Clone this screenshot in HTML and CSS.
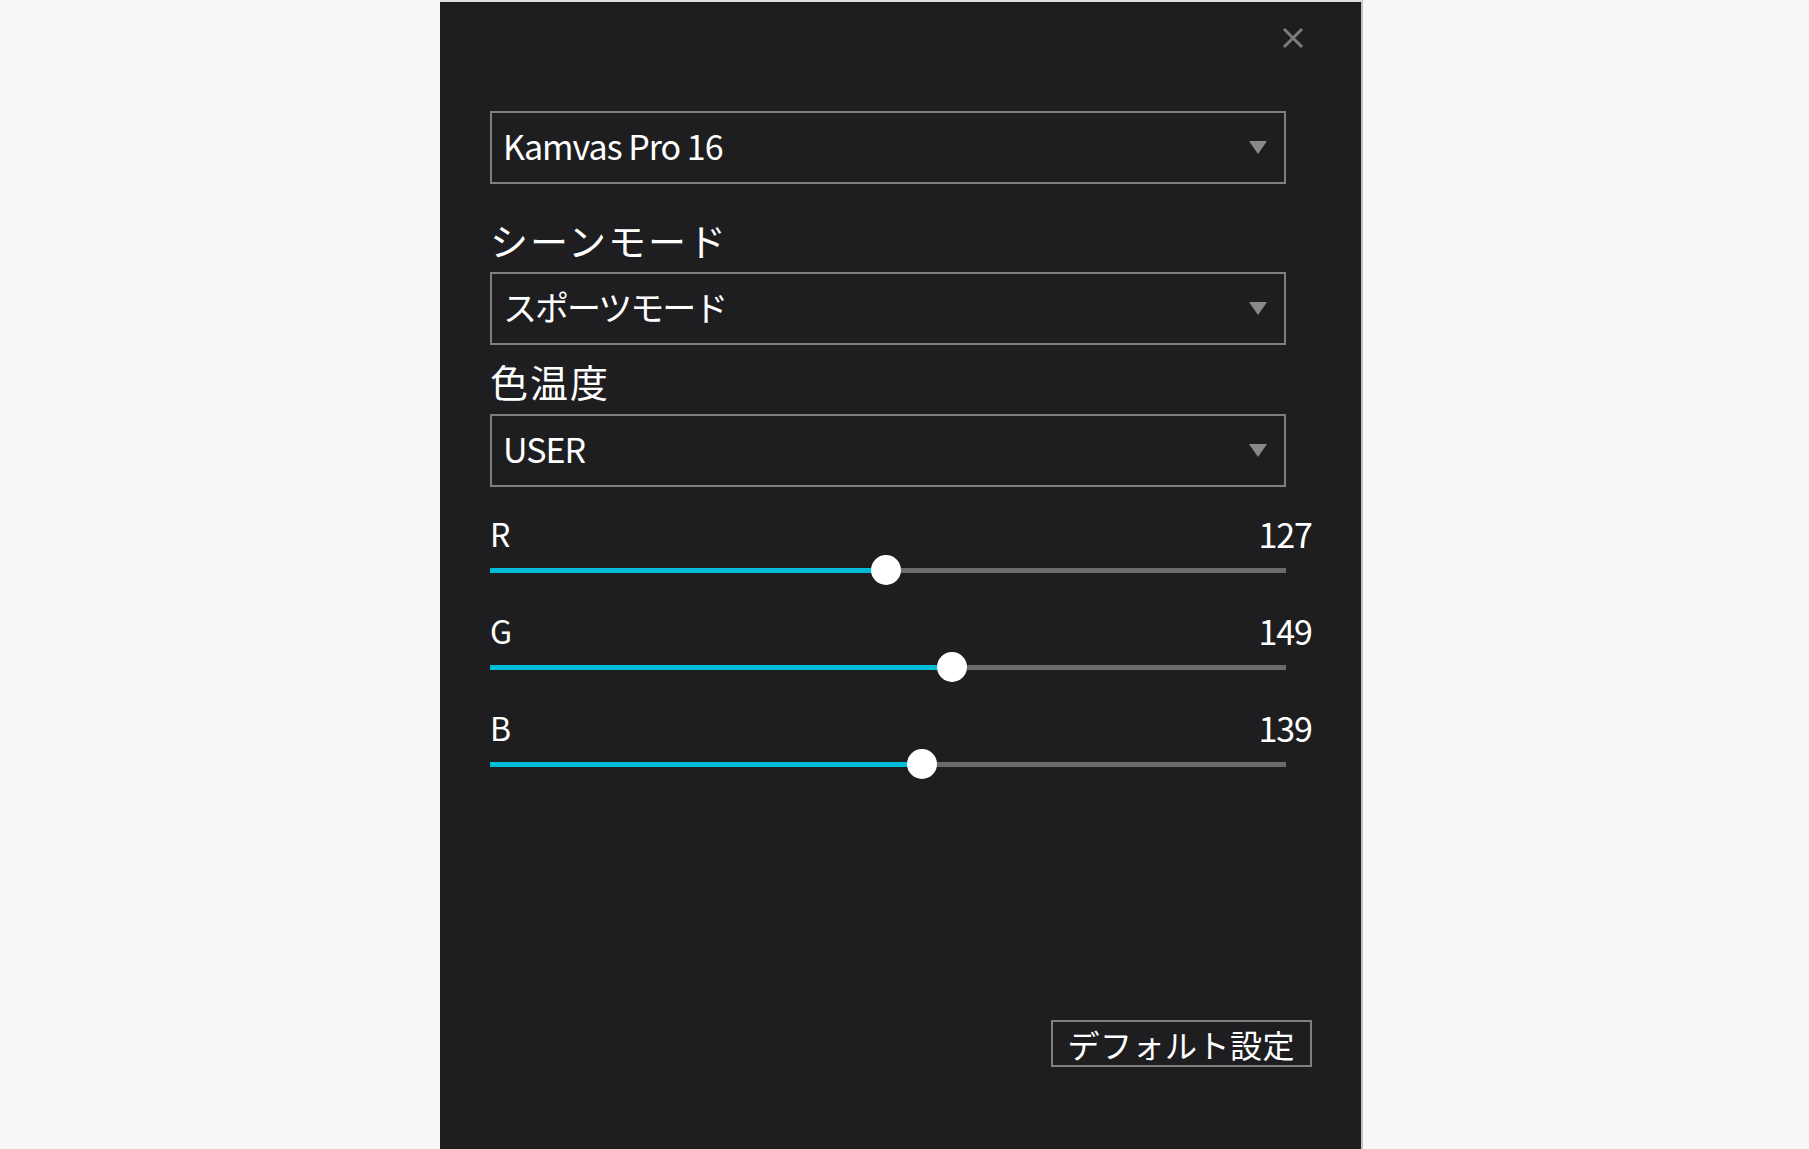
FILE: index.html
```html
<!DOCTYPE html>
<html lang="ja">

<head>
    <meta charset="UTF-8" />
    <meta name="viewport" content="width=device-width, initial-scale=1" />
    <title>ディスプレイ設定</title>
    <link rel="stylesheet" href="styles.css">
</head>

<body>
    <div class="panel" role="dialog" aria-label="ディスプレイ設定">
        <div class="panel-top">
            <button class="close" aria-label="閉じる">
                <svg viewBox="0 0 22 22" xmlns="http://www.w3.org/2000/svg">
                    <path d="M2 2 L20 20 M20 2 L2 20" />
                </svg>
            </button>
        </div>

        <div class="select"><span>Kamvas Pro 16</span><i class="caret"></i></div>

        <div class="label label-first">シーンモード</div>
        <div class="select"><span class="jp">スポーツモード</span><i class="caret"></i></div>

        <div class="label">色温度</div>
        <div class="select"><span>USER</span><i class="caret"></i></div>

        <div class="sliders">
            <div class="slider">
                <div class="slider-head"><span class="slider-name">R</span><span class="slider-value">127</span></div>
                <div class="track" style="--v: 0.498"><div class="fill"></div><div class="thumb"></div></div>
            </div>
            <div class="slider">
                <div class="slider-head"><span class="slider-name">G</span><span class="slider-value">149</span></div>
                <div class="track" style="--v: 0.584"><div class="fill"></div><div class="thumb"></div></div>
            </div>
            <div class="slider">
                <div class="slider-head"><span class="slider-name">B</span><span class="slider-value">139</span></div>
                <div class="track" style="--v: 0.545"><div class="fill"></div><div class="thumb"></div></div>
            </div>
        </div>

        <button class="default-btn">デフォルト設定</button>
    </div>
</body>
</html>
```

FILE: styles.css
```css
* {
    box-sizing: border-box;
}

body {
    margin: 0;
    height: 1149px;
    overflow: hidden;
    background: #f7f7f7;
    font-family: "Noto Sans CJK JP", "Noto Sans", sans-serif;
    color: #fff;
}

.panel {
    width: 923px;
    height: 1149px;
    margin-left: 440px;
    padding: 0 49px 82px 50px;
    background: #1e1e20;
    border-top: 2px solid #dedede;
    border-right: 2px solid #c2c2c2;
    display: flex;
    flex-direction: column;
}

.panel-top {
    height: 109px;
    display: flex;
    justify-content: flex-end;
    align-items: flex-start;
}

.close {
    width: 22px;
    height: 22px;
    margin: 25px 8px 0 0;
    padding: 0;
    border: none;
    background: none;
    cursor: pointer;
}

.close svg {
    display: block;
    width: 22px;
    height: 22px;
    stroke: #7c7c7c;
    stroke-width: 3;
    fill: none;
}

/* dropdowns */
.select {
    height: 73px;
    margin-right: 26px;
    padding: 0 17px 3px 11px;
    border: 2px solid #7f7f7f;
    display: flex;
    align-items: center;
    justify-content: space-between;
    font-size: 34px;
    line-height: 34px;
    letter-spacing: -1px;
}

.select .jp {
    letter-spacing: -2px;
}

.caret {
    width: 0;
    height: 0;
    margin-top: 3px;
    border-left: 9px solid transparent;
    border-right: 9px solid transparent;
    border-top: 13px solid #8a8a8a;
}

.label {
    margin: 17px 0 14px;
    font-size: 38px;
    line-height: 38px;
    letter-spacing: 2px;
}

.label-first {
    margin: 37px 0 13px;
}

/* RGB sliders */
.sliders {
    margin-top: 30px;
    display: flex;
    flex-direction: column;
    gap: 29px;
}

.slider-head {
    display: flex;
    justify-content: space-between;
    align-items: flex-start;
}

.slider-name {
    font-size: 32px;
    line-height: 32px;
}

.slider-value {
    font-size: 34px;
    line-height: 34px;
    letter-spacing: -1px;
}

.track {
    position: relative;
    height: 30px;
    margin: 4px 26px 0 0;
    display: flex;
    align-items: center;
}

.track::before {
    content: "";
    width: 100%;
    height: 5px;
    background: #6b6b6b;
}

.fill {
    position: absolute;
    left: 0;
    top: 12.5px;
    height: 5px;
    width: calc(var(--v) * (100% - 30px) + 15px);
    background: #00bcd6;
}

.thumb {
    position: absolute;
    top: 0;
    left: calc(var(--v) * (100% - 30px));
    width: 30px;
    height: 30px;
    border-radius: 50%;
    background: #fff;
}

.default-btn {
    align-self: flex-end;
    margin-top: auto;
    height: 47px;
    padding: 0 15px 0 14px;
    border: 2px solid #7f7f7f;
    background: transparent;
    color: #fff;
    font-family: inherit;
    font-size: 32px;
    line-height: 32px;
    letter-spacing: 0.5px;
    cursor: pointer;
}
```
